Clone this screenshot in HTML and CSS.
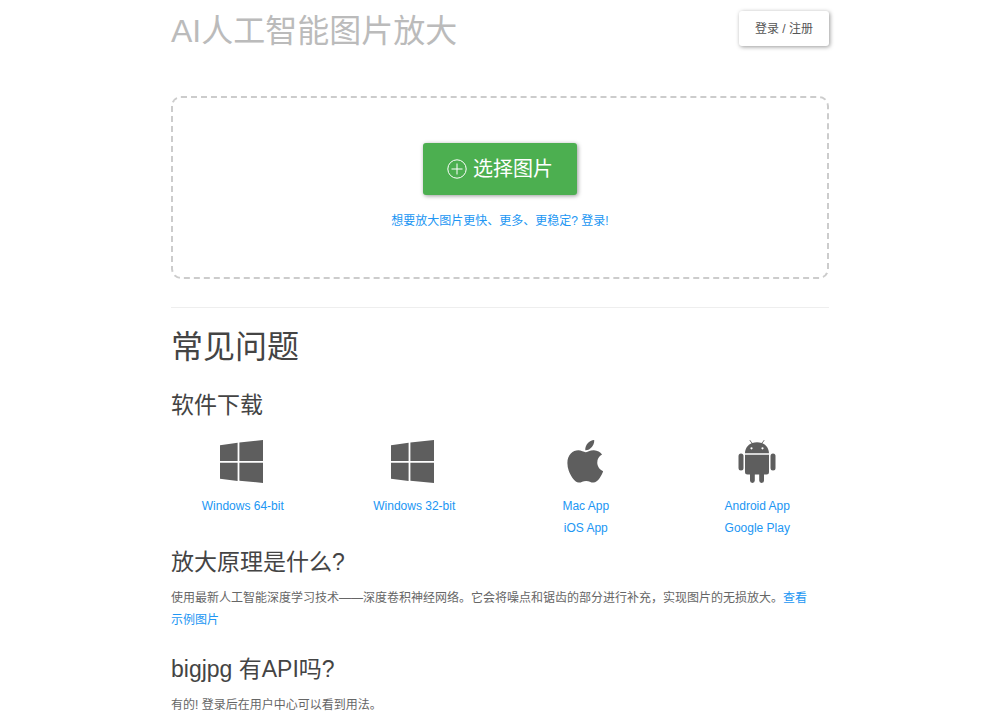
FILE: index.html
```html
<!DOCTYPE html>
<html lang="zh-CN">
<head>
<meta charset="utf-8">
<meta name="viewport" content="width=device-width, initial-scale=1">
<title>AI人工智能图片放大</title>
<link rel="stylesheet" href="styles.css">
</head>
<body>
<div class="container">
  <header class="header">
    <h1 class="title">AI人工智能图片放大</h1>
    <button class="btn btn-login" type="button">登录 / 注册</button>
  </header>
  <main>
    <section class="dropzone">
      <button class="btn btn-select" type="button">
        <svg class="plus" viewBox="0 0 20 20" aria-hidden="true"><circle cx="10" cy="10" r="9.2"/><path d="M10 4.5v11M4.5 10h11"/></svg>
        <span>选择图片</span>
      </button>
      <a class="hint" href="#login">想要放大图片更快、更多、更稳定? 登录!</a>
    </section>
    <hr class="divider">
    <h2 class="faq-title">常见问题</h2>
    <section>
      <h3 class="question">软件下载</h3>
      <div class="downloads">
        <div class="download">
          <svg class="os" viewBox="0 0 48 48" aria-hidden="true"><path d="M1 7.2 18.6 4.7V23H1zM20.4 4.4 44 2v21H20.4zM1 24.8h17.6v18.1L1 40.8zM20.4 24.8H44v20.1l-23.6-2.2z"/></svg>
          <a href="#win64">Windows 64-bit</a>
        </div>
        <div class="download">
          <svg class="os" viewBox="0 0 48 48" aria-hidden="true"><path d="M1 7.2 18.6 4.7V23H1zM20.4 4.4 44 2v21H20.4zM1 24.8h17.6v18.1L1 40.8zM20.4 24.8H44v20.1l-23.6-2.2z"/></svg>
          <a href="#win32">Windows 32-bit</a>
        </div>
        <div class="download">
          <svg class="os" viewBox="0 0 48 48" aria-hidden="true"><path transform="translate(5 -1) scale(.095)" d="M318.7 268.7c-.2-36.7 16.4-64.4 50-84.8-18.8-26.9-47.2-41.7-84.7-44.6-35.5-2.8-74.3 20.7-88.5 20.7-15 0-49.4-19.7-76.4-19.7C63.3 141.2 4 184.8 4 273.5q0 39.3 14.4 81.2c12.8 36.7 59 126.7 107.2 125.2 25.2-.6 43-17.9 75.8-17.9 31.8 0 48.3 17.9 76.4 17.9 48.6-.7 90.4-82.5 102.6-119.3-65.2-30.7-61.7-90-61.7-91.9zm-56.6-164.2c27.3-32.4 24.8-61.9 24-72.5-24.1 1.4-52 16.4-67.9 34.9-17.5 19.8-27.8 44.3-25.6 71.9 26.1 2 49.9-11.4 69.5-34.3z"/></svg>
          <a href="#mac">Mac App</a>
          <a href="#ios">iOS App</a>
        </div>
        <div class="download">
          <svg class="os" viewBox="0 0 48 48" aria-hidden="true">
            <path d="M12 15.3C12 10.5 14.8 7 18.6 5.3L16.4 2.3 17 1.9 19.4 5C22.3 4 25.7 4 28.6 5L31 1.9 31.6 2.3 29.4 5.3C33.2 7 36 10.5 36 15.3zM18.5 9.2a1.1 1.1 0 1 0 0 2.2 1.1 1.1 0 0 0 0-2.2zM29.5 9.2a1.1 1.1 0 1 0 0 2.2 1.1 1.1 0 0 0 0-2.2z"/>
            <path d="M12 16.8H36V34a2.5 2.5 0 0 1-2.5 2.5H31v6a2.4 2.4 0 0 1-4.8 0v-6h-4.4v6a2.4 2.4 0 0 1-4.8 0v-6h-2.5A2.5 2.5 0 0 1 12 34z"/>
            <rect x="5.5" y="15.5" width="5" height="17" rx="2.5"/><rect x="37.5" y="15.5" width="5" height="17" rx="2.5"/>
          </svg>
          <a href="#android">Android App</a>
          <a href="#play">Google Play</a>
        </div>
      </div>
    </section>
    <section class="faq">
      <h3 class="question">放大原理是什么?</h3>
      <p class="answer">使用最新人工智能深度学习技术——深度卷积神经网络。它会将噪点和锯齿的部分进行补充，实现图片的无损放大。<a href="#samples">查看示例图片</a></p>
    </section>
    <section class="faq">
      <h3 class="question">bigjpg 有API吗?</h3>
      <p class="answer">有的! 登录后在用户中心可以看到用法。</p>
    </section>
  </main>
</div>
</body>
</html>
```
FILE: styles.css
```css
* {
  box-sizing: border-box;
}

body {
  margin: 0;
  background: #fff;
  color: #666;
  font-family: "Liberation Sans", "Noto Sans CJK SC", sans-serif;
  font-size: 12px;
  line-height: 22px;
}

h1, h2, h3, p {
  margin: 0;
  font-weight: 400;
}

a {
  color: #2196f3;
  text-decoration: none;
}

.container {
  max-width: 658px;
  margin: 0 auto;
}

.header {
  display: flex;
  justify-content: space-between;
  align-items: flex-start;
  padding-top: 9px;
}

.title {
  color: #bbb;
  font-size: 32px;
  line-height: 44px;
}

.btn {
  border: 0;
  border-radius: 3px;
  box-shadow: 1px 1px 4px rgba(0, 0, 0, 0.4);
  font-family: inherit;
  cursor: pointer;
}

.btn-login {
  margin-top: 2px;
  padding: 7px 16px 5px;
  background: #fff;
  color: #555;
  font-size: 12px;
  line-height: 23px;
}

.dropzone {
  display: flex;
  flex-direction: column;
  align-items: center;
  gap: 15px;
  margin-top: 43px;
  padding: 45px 16px;
  border: 2px dashed #ccc;
  border-radius: 10px;
}

.btn-select {
  display: flex;
  align-items: center;
  gap: 6px;
  padding: 10px 24px;
  background: #4caf50;
  color: #fff;
  font-size: 20px;
  line-height: 32px;
}

.plus {
  width: 20px;
  height: 20px;
  fill: none;
  stroke: #fff;
  stroke-width: 1;
}

.divider {
  height: 1px;
  margin: 28px 0 17px;
  border: 0;
  background: #eee;
}

.faq-title {
  margin-bottom: 20px;
  color: #444;
  font-size: 32px;
  line-height: 44px;
}

.question {
  color: #444;
  font-size: 23px;
  line-height: 32px;
}

.downloads {
  display: grid;
  grid-template-columns: repeat(4, 1fr);
  margin: 17px -14px 7px;
}

.download {
  display: flex;
  flex-direction: column;
  align-items: center;
}

.os {
  width: 48px;
  height: 48px;
  margin-bottom: 9px;
  fill: #5e5e5e;
}

.faq + .faq {
  margin-top: 22px;
}

.answer {
  margin-top: 9px;
  padding-right: 16px;
}
```
